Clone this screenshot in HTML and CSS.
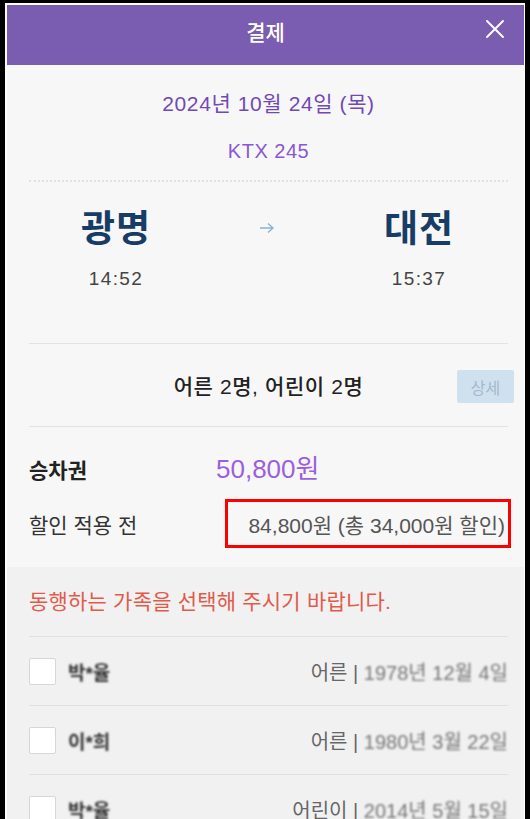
FILE: index.html
```html
<!DOCTYPE html>
<html lang="ko">
  <head>
    <meta charset="UTF-8" />
    <meta name="viewport" content="width=device-width, initial-scale=1" />
    <title>결제</title>
    <link rel="stylesheet" href="styles.css">
  </head>
  <body>
    <div class="frame">
      <div class="sheet">
        <header class="topbar">
          <h1>결제</h1>
          <button class="close-btn" aria-label="닫기">
            <svg width="20" height="20" viewBox="0 0 20 20">
              <path d="M2 2 L18 18 M18 2 L2 18" stroke="#fff" stroke-width="2" fill="none" stroke-linecap="round" />
            </svg>
          </button>
        </header>

        <main class="trip">
          <div class="trip-date">2024년 10월 24일 (목)</div>
          <div class="train-no">KTX 245</div>

          <div class="route">
            <div class="station">
              <div class="station-name">광명</div>
              <div class="station-time">14:52</div>
            </div>
            <div class="route-arrow">
              <svg width="16" height="12" viewBox="0 0 16 12">
                <path d="M1 6 H14 M9 1.5 L14 6 L9 10.5" stroke="#86b4da" stroke-width="1.4" fill="none" />
              </svg>
            </div>
            <div class="station">
              <div class="station-name">대전</div>
              <div class="station-time">15:37</div>
            </div>
          </div>

          <div class="passengers">
            <span class="passenger-count">어른 2명, 어린이 2명</span>
            <button class="detail-btn">상세</button>
          </div>

          <div class="fare-row fare-ticket">
            <span class="fare-label strong">승차권</span>
            <span class="fare-price">50,800원</span>
          </div>
          <div class="fare-row fare-origin">
            <span class="fare-label">할인 적용 전</span>
            <span class="fare-before">84,800원 (총 34,000원 할인)</span>
          </div>
        </main>

        <section class="family">
          <p class="family-notice">동행하는 가족을 선택해 주시기 바랍니다.</p>
          <ul class="family-list">
            <li class="family-item">
              <span class="check"></span>
              <span class="member-name masked">박*율</span>
              <span class="member-info">어른 | <span class="masked">1978년 12월 4일</span></span>
            </li>
            <li class="family-item">
              <span class="check"></span>
              <span class="member-name masked">이*희</span>
              <span class="member-info">어른 | <span class="masked">1980년 3월 22일</span></span>
            </li>
            <li class="family-item">
              <span class="check"></span>
              <span class="member-name masked">박*율</span>
              <span class="member-info">어린이 | <span class="masked">2014년 5월 15일</span></span>
            </li>
          </ul>
        </section>
      </div>
    </div>
  </body>
</html>
```

FILE: styles.css
```css
* {
  margin: 0;
  padding: 0;
  box-sizing: border-box;
}

body {
  font-family: "Liberation Sans", "Noto Sans CJK KR", sans-serif;
  background: #fff;
  color: #222;
}

.frame {
  height: 100vh;
  overflow: hidden;
  border-style: solid;
  border-color: #000;
  border-width: 3px 5px 0 5px;
}

.sheet {
  background: #fff;
  padding: 2px 1px 0 2px;
  min-height: 100%;
}

/* Header */
.topbar {
  height: 60px;
  background: #7a5cb1;
  display: flex;
  align-items: center;
  justify-content: center;
  position: relative;
}

.topbar h1 {
  font-size: 21px;
  font-weight: 500;
  color: #fff;
  margin-top: -8px;
}

.close-btn {
  position: absolute;
  right: 17px;
  top: 12px;
  width: 24px;
  height: 24px;
  background: none;
  border: none;
  display: flex;
  align-items: center;
  justify-content: center;
}

/* Trip summary */
.trip {
  background: #f7f7f7;
  padding: 25px 16px 19px 22px;
}

.trip-date {
  text-align: center;
  font-size: 21px;
  line-height: 28px;
  letter-spacing: 0.6px;
  color: #7248b8;
}

.train-no {
  text-align: center;
  font-size: 20px;
  line-height: 26px;
  letter-spacing: 0.5px;
  margin-top: 20px;
  color: #8a57d6;
  padding-bottom: 16px;
  border-bottom: 2px dotted #e2e2e2;
}

.route {
  display: grid;
  grid-template-columns: 174px 1fr 178px;
  align-items: start;
  padding: 27px 0 52px;
  border-bottom: 1px solid #e3e3e3;
}

.station {
  text-align: center;
}

.station-name {
  font-size: 37px;
  line-height: 42px;
  font-weight: 700;
  letter-spacing: 1px;
  color: #173d66;
}

.station-time {
  margin-top: 16px;
  font-size: 19px;
  line-height: 24px;
  letter-spacing: 1.4px;
  color: #444;
}

.route-arrow {
  display: flex;
  justify-content: center;
  padding-top: 13px;
}

.passengers {
  height: 83px;
  display: flex;
  align-items: center;
  justify-content: center;
  position: relative;
  border-bottom: 1px solid #e3e3e3;
}

.passenger-count {
  font-size: 21px;
  font-weight: 500;
  letter-spacing: 0.6px;
  color: #222;
}

.detail-btn {
  position: absolute;
  right: -6px;
  top: 26px;
  width: 57px;
  height: 33px;
  border: none;
  border-radius: 2px;
  background: #cfe1ef;
  color: #a3b9cc;
  font-family: inherit;
  font-size: 16px;
}

.fare-row {
  display: flex;
  align-items: center;
}

.fare-ticket {
  margin-top: 22px;
}

.fare-label {
  width: 187px;
  font-size: 21px;
  color: #333;
}

.fare-label.strong {
  font-weight: 700;
  color: #222;
}

.fare-price {
  font-size: 26px;
  line-height: 40px;
  color: #9b5fe0;
}

.fare-origin {
  margin-top: 10px;
}

.fare-origin .fare-label {
  width: 196px;
}

.fare-before {
  flex: 1;
  height: 49px;
  margin-right: -3px;
  border: 3px solid #ff0000;
  display: flex;
  align-items: center;
  justify-content: flex-end;
  padding-right: 3px;
  font-size: 21px;
  color: #555;
}

/* Family selection */
.family {
  background: #f1f1f1;
  padding: 23px 16px 0 22px;
}

.family-notice {
  font-size: 21px;
  line-height: 24px;
  letter-spacing: 0.2px;
  color: #e25a4a;
  padding-bottom: 22px;
  border-bottom: 1px solid #e0e0e0;
}

.family-list {
  list-style: none;
}

.family-item {
  height: 69px;
  display: flex;
  align-items: center;
  gap: 12px;
  border-bottom: 1px solid #e0e0e0;
}

.check {
  width: 27px;
  height: 27px;
  background: #fff;
  border: 1px solid #d6d6d6;
  border-radius: 2px;
}

.member-name {
  font-size: 19px;
  font-weight: 700;
}

.member-info {
  margin-left: auto;
  font-size: 20px;
  color: #666;
}

.masked {
  filter: blur(1.3px);
  color: #777;
}

.member-name.masked {
  color: #333;
}
```
